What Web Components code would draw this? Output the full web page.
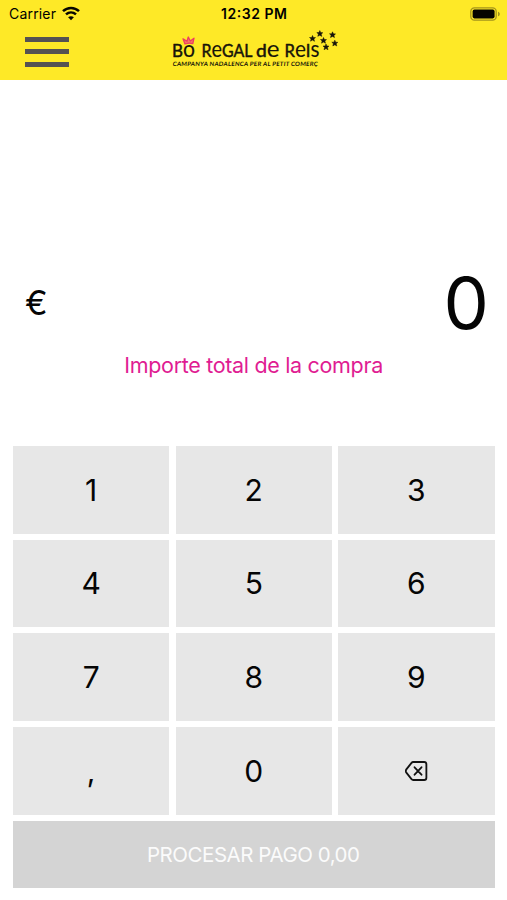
<!DOCTYPE html>
<html lang="es"><head><meta charset="utf-8"><title>Bo Regal de Reis</title>
<style>html,body{margin:0;background:#fff}body{font-family:Inter,"Liberation Sans",sans-serif;color:#050505}</style></head>
<body><pay-screen></pay-screen>
<script>
const define=(name,html)=>{
  const t=document.createElement('template');t.innerHTML=html;
  customElements.define(name,class extends HTMLElement{
    constructor(){super();this.attachShadow({mode:'open'}).append(t.content.cloneNode(true));}
  });
};
define('status-bar',`<style>
:host{display:grid;grid-template-columns:1fr auto 1fr;align-items:center;height:27px;padding:0 6px 0 9px;font-size:14px;line-height:27px;color:#16150a}
.l{display:flex;align-items:center;gap:6px}.r{justify-self:end;display:flex}
svg{display:block;overflow:visible}</style>
<div class="l"><svg width="47" height="27"><text x="0" y="19" font-size="14" textLength="47">Carrier</text></svg>
<svg width="18" height="15" viewBox="0 0 18 15" fill="none" stroke="#080700" stroke-width="2.5"><path d="M1 5.2C5.6.8 12.4.8 17 5.2M4 8.4c2.9-2.7 7.1-2.7 10 0"/><path d="M9 14.2 6.1 11.3c1.7-1.5 4.1-1.5 5.8 0z" fill="#080700" stroke="none"/></svg></div>
<svg width="69" height="27"><text x="0" y="19" font-size="14" font-weight="600" textLength="66">12:32 PM</text></svg>
<div class="r"><svg width="31" height="14" viewBox="0 0 31 14"><rect x=".8" y=".8" width="25.4" height="12.4" rx="3.6" fill="none" stroke="#a4941c" stroke-width="1.3"/><rect x="2.6" y="2.6" width="22" height="8.8" rx="1.8" fill="#050400"/><path d="M28 4.7c2.4.7 2.4 3.9 0 4.6z" fill="#a4941c"/></svg></div>`);
define('menu-icon',`<style>:host{display:flex;flex-direction:column;gap:7.3px;width:44px}i{height:5px;background:#555252}</style><i></i><i></i><i></i>`);
define('brand-logo',`<style>:host{display:block;width:169px;height:44px}svg{display:block}text{font-family:Lato,sans-serif;fill:#17140a}.n{font-size:18px;stroke:#17140a;stroke-width:.5;stroke-linejoin:round}.s{font-size:22.500px;stroke-width:.1}.t{font-size:6px;font-weight:700}</style>
<svg width="169" height="44" viewBox="171 28 169 44">
<g class="n"><text x="172" y="57" textLength="23" lengthAdjust="spacingAndGlyphs">B<tspan class="s">o</tspan></text>
<text x="201.500" y="57" textLength="51" lengthAdjust="spacingAndGlyphs">R<tspan class="s">e</tspan>GAL</text>
<text x="256" y="57" textLength="23.500" lengthAdjust="spacingAndGlyphs">d<tspan class="s">e</tspan></text>
<text x="284.500" y="57" textLength="35" lengthAdjust="spacingAndGlyphs">R<tspan class="s">e</tspan>I<tspan class="s">s</tspan></text></g>
<path d="M185 44 183 38.800 187 41.200 188.300 37 190.300 41 194 38.200 192.800 43.600Q189 42.500 185 44Z" fill="#f27b61" stroke="#ed3c63" stroke-width="1.300" stroke-linejoin="round"/>
<text class="t" transform="translate(172.500 66) skewX(-7)" textLength="145" lengthAdjust="spacing">CAMPANYA NADALENCA PER AL PETIT COMERÇ</text>
<defs><path id="s" d="M0-3 .9-1 3-.9 1.400.600 2 2.800 0 1.600-2 2.700-1.400.500-3-1-.8-1z" fill="#17140a" stroke="#17140a" stroke-width=".500"/></defs>
<use href="#s" x="312.500" y="38.500"/><use href="#s" x="319.800" y="33.600"/><use href="#s" x="332.500" y="34.800"/><use href="#s" x="323.500" y="40.500"/><use href="#s" x="334.800" y="43.200"/><use href="#s" x="326" y="47"/></svg>`);
define('app-header',`<style>:host{display:block;height:79.500px;background:#fee927}nav{display:grid;grid-template-columns:146px 169px;padding-left:25px;align-items:start}menu-icon{margin-top:10px}brand-logo{margin-top:1px}</style><status-bar></status-bar><nav><menu-icon></menu-icon><brand-logo></brand-logo></nav>`);
define('amount-display',`<style>:host{display:block;height:366.500px;padding-top:176px;box-sizing:border-box}
.row{display:flex;justify-content:space-between;align-items:center;height:94px;padding:0 18px 0 25px}
.c{font-size:34px;font-weight:400}.v{font-size:72px;line-height:94px}
p{margin:2px 0 0;text-align:center;height:30px}svg{display:block;margin:auto;overflow:visible}text{fill:#e01c92}</style>
<div class="row"><span class="c">€</span><span class="v">0</span></div><p><svg width="260" height="30"><text x=".3" y="20.800" font-size="21.500" textLength="259">Importe total de la compra</text></svg></p>`);
define('key-button',`<style>:host{display:flex;align-items:center;justify-content:center;background:#e7e7e7;font-size:30px;line-height:1}</style><slot></slot>`);
define('back-icon',`<style>:host{display:block;padding-left:1px}svg{display:block}</style><svg width="23" height="20" viewBox="0 0 24 20" preserveAspectRatio="none" fill="none" stroke="#111" stroke-width="1.900" stroke-linecap="round" stroke-linejoin="round"><path d="M8.500 1H20a2.300 2.300 0 0 1 2.300 2.300v13.400A2.300 2.300 0 0 1 20 19H8.500Q7.500 19 6.800 18.200L1.200 11.300Q.5 10 1.200 8.700L6.800 1.800Q7.500 1 8.500 1ZM10 6.300l7.200 7.400M17.200 6.300 10 13.700"/></svg>`);
define('key-pad',`<style>:host{display:grid;grid-template-columns:repeat(3,1fr);grid-auto-rows:87.500px;gap:6.200px;padding:0 12.500px 0 13px}</style>
${[1,2,3,4,5,6,7,8,9,',',0].map(k=>`<key-button>${k}</key-button>`).join('')}<key-button><back-icon></back-icon></key-button>`);
define('pay-button',`<style>:host{display:flex;align-items:center;justify-content:center;margin:6px 12.500px 0 13px;height:67px;background:#d4d4d4}svg{display:block;overflow:visible}text{fill:#fbfbfb}</style><svg width="214" height="28"><text x="0" y="21.500" font-size="20.500" textLength="213">PROCESAR PAGO 0,00</text></svg>`);
define('pay-screen',`<style>:host{display:block;width:507px;height:900px;overflow:hidden;background:#fff}</style><app-header></app-header><amount-display></amount-display><key-pad></key-pad><pay-button></pay-button>`);
</script></body></html>
